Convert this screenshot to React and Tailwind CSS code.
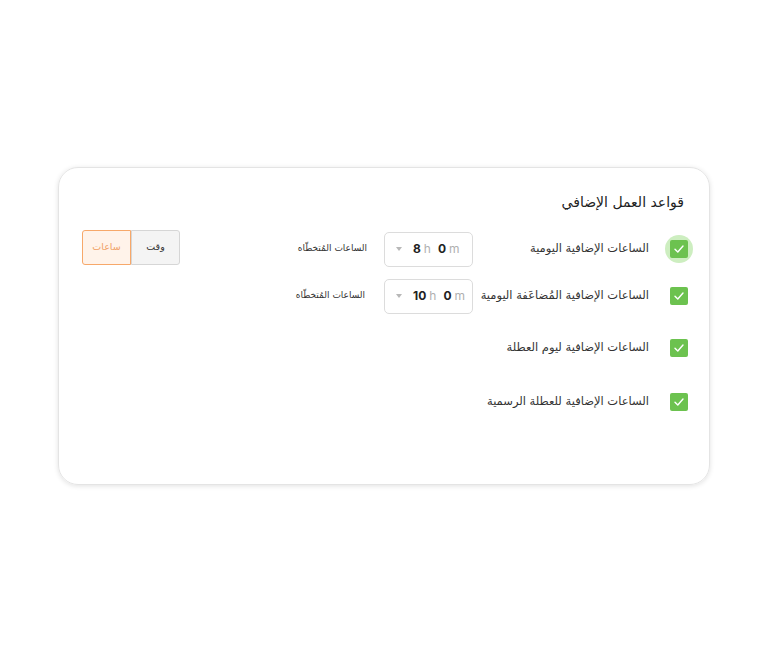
import React from "react";

function Check({ halo }) {
  return (
    <div className="relative w-[18px] h-[18px] flex items-center justify-center shrink-0">
      {halo && <div className="absolute -inset-[5px] rounded-full bg-[#cdeec0]" />}
      <div className="relative w-[18px] h-[18px] rounded-[2px] bg-[#6cc24f] flex items-center justify-center">
        <svg width="12" height="12" viewBox="0 0 12 12" fill="none">
          <path d="M2 6.2 L4.8 9 L10 3" stroke="white" strokeWidth="1.4" strokeLinecap="round" strokeLinejoin="round" />
        </svg>
      </div>
    </div>
  );
}

function TimeInput({ h }) {
  return (
    <div dir="ltr" className="w-[89px] h-[35px] border border-[#dcdcdc] rounded-[5px] flex items-center pl-[10px] font-['Inter',sans-serif] text-[12px] shrink-0">
      <svg width="8" height="6" viewBox="0 0 8 6" className="mr-[10px]">
        <path d="M1 1 L4 5 L7 1 Z" fill="#b8b8b8" />
      </svg>
      <span className="font-bold text-[#222]">{h}</span>
      <span className="text-[#b0b0b0] ml-[3px]">h</span>
      <span className="font-bold text-[#222] ml-[7px]">0</span>
      <span className="text-[#b0b0b0] ml-[3px]">m</span>
    </div>
  );
}

export default function App() {
  const f = "font-['DejaVu_Sans','Noto_Sans',sans-serif]";
  return (
    <div className={`w-[768px] h-[653px] bg-white pt-[167px] px-[58px] ${f}`} dir="rtl">
      <div className="w-[652px] h-[318px] rounded-[20px] border border-[#e4e4e4] shadow-[0_1px_5px_rgba(0,0,0,0.12)] pr-[21px] pl-[23px] pt-[22px]">
        <div className="text-[14px] text-[#222] pr-[4px] h-[24px] leading-[24px] whitespace-nowrap">قواعد العمل الإضافي</div>
        <div className="flex items-center h-[36px] mt-[17px]">
          <Check halo />
          <div className="w-[197px] pr-[21px] text-[11.5px] text-[#333] whitespace-nowrap">الساعات الإضافية اليومية</div>
          <TimeInput h="8" />
          <div className="pr-[17px] text-[9px] text-[#333] whitespace-nowrap">الساعات المُتخطّاه</div>
          <div className="flex-1" />
          <div className="flex h-[35px] mb-[4px] text-[9.5px]">
            <div className="w-[49px] flex items-center justify-center bg-[#f4f4f4] border border-[#d6d6d6] rounded-r-[3px] text-[#333]">وقت</div>
            <div className="w-[49px] flex items-center justify-center bg-[#fff3ea] border border-[#f7a86a] rounded-l-[3px] text-[#f0a065]">ساعات</div>
          </div>
        </div>
        <div className="flex items-center h-[36px] mt-[11px]">
          <Check />
          <div className="w-[197px] pr-[21px] text-[11.5px] text-[#333] whitespace-nowrap">الساعات الإضافية المُضاعَفة اليومية</div>
          <TimeInput h="10" />
          <div className="pr-[19px] text-[9px] text-[#333] whitespace-nowrap">الساعات المُتخطّاه</div>
        </div>
        <div className="flex items-center h-[36px] mt-[16px]">
          <Check />
          <div className="pr-[21px] text-[11.5px] text-[#333] whitespace-nowrap">الساعات الإضافية ليوم العطلة</div>
        </div>
        <div className="flex items-center h-[36px] mt-[18px]">
          <Check />
          <div className="pr-[21px] text-[11.5px] text-[#333] whitespace-nowrap">الساعات الإضافية للعطلة الرسمية</div>
        </div>
      </div>
    </div>
  );
}
